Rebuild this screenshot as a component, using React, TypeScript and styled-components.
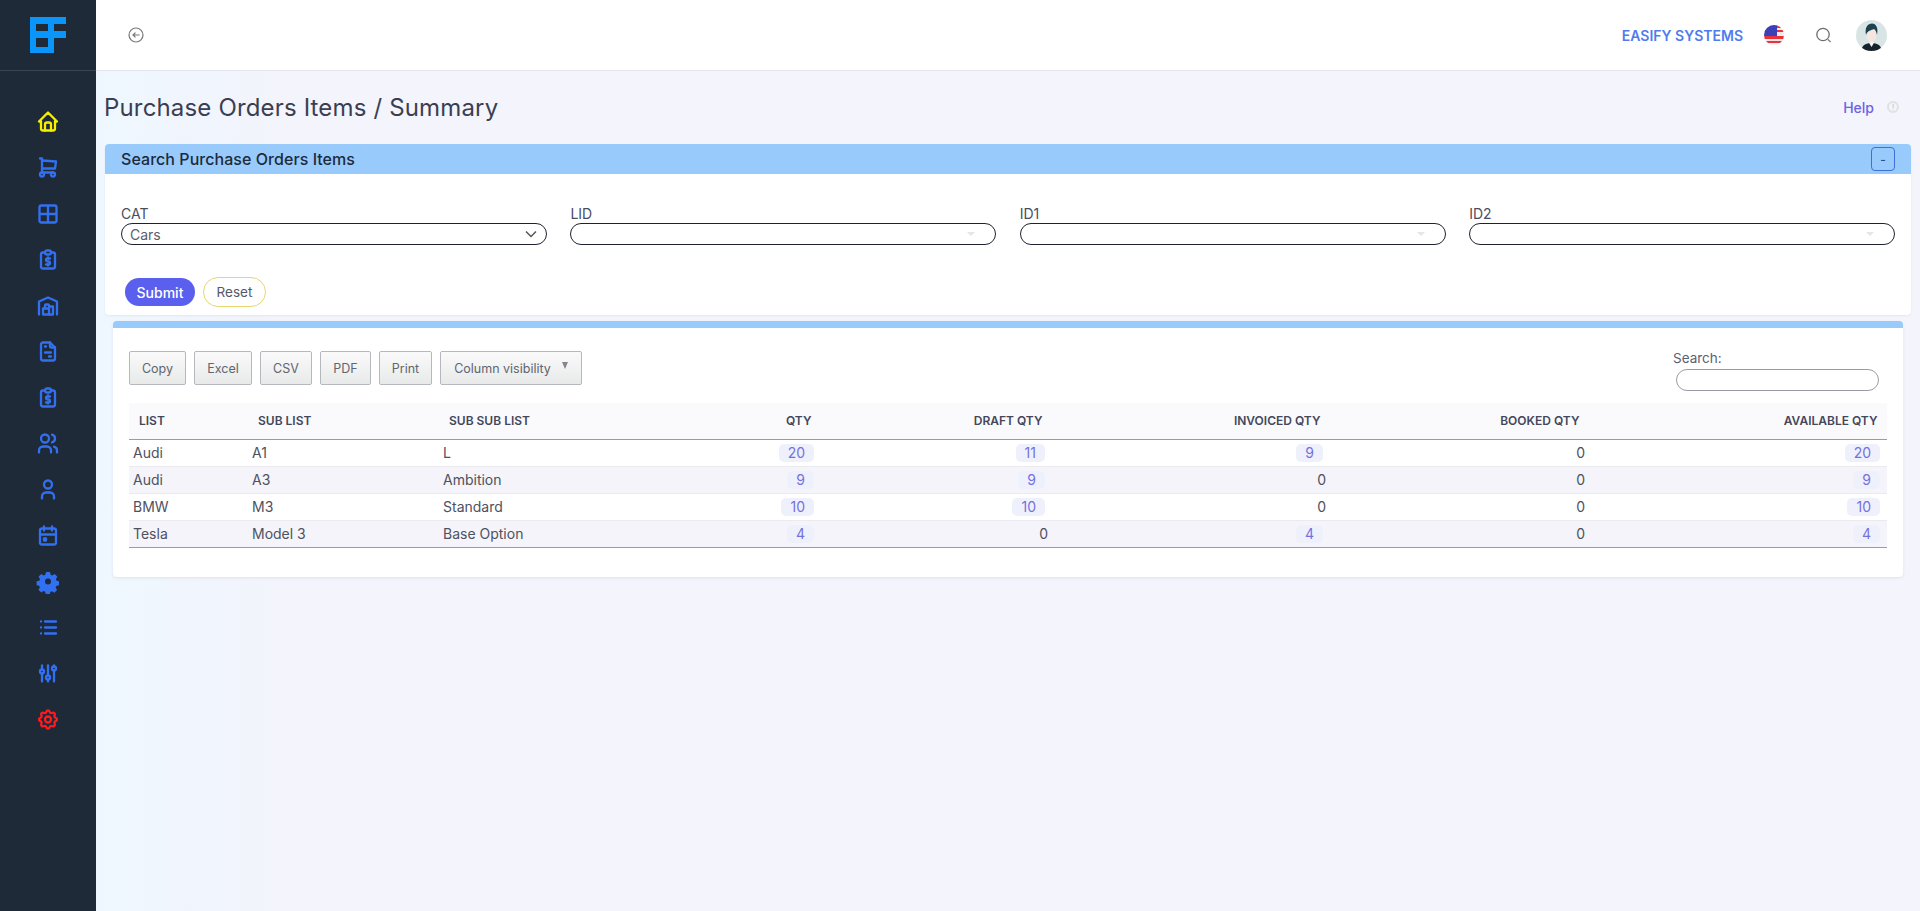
import React from "react";
import styled, { createGlobalStyle } from "styled-components";
import {
  TbHome, TbShoppingCart, TbReportMoney, TbBuildingWarehouse, TbFileInvoice,
  TbUsers, TbUser, TbCalendarEvent, TbList, TbAdjustments, TbSettings,
} from "react-icons/tb";

const Global = createGlobalStyle`
  html, body { margin: 0; padding: 0; height: 100%; }
  body { font-family: Inter, "Liberation Sans", sans-serif; background: #f3f4fc; color: #3f4254; }
  * { box-sizing: border-box; }
`;

const Shell = styled.div`
  display: flex;
  min-height: 911px;
  height: 911px;
  overflow: hidden;
`;

const Sidebar = styled.aside`
  width: 96px;
  flex: none;
  background: #1f2a38;
  display: flex;
  flex-direction: column;
  align-items: center;
`;

const LogoRow = styled.div`
  height: 71px;
  width: 100%;
  display: flex;
  align-items: center;
  justify-content: center;
  border-bottom: 1px solid #3a4553;
  padding-bottom: 1px;
`;

const Nav = styled.nav`
  display: flex;
  flex-direction: column;
  align-items: center;
  gap: 22px;
  padding-top: 38.5px;
`;

const NavIcon = styled.span<{ $c?: string }>`
  width: 24px;
  height: 24px;
  display: flex;
  align-items: center;
  justify-content: center;
  color: ${(p) => p.$c || "#3270f2"};
  svg { display: block; stroke-width: 2.3; }
`;

const Main = styled.main`
  flex: 1;
  min-width: 0;
  display: flex;
  flex-direction: column;
  background: linear-gradient(90deg, #eef7ff 0, #f3f4fc 180px);
`;

const Topbar = styled.header`
  height: 71px;
  flex: none;
  background: #fff;
  border-bottom: 1px solid #e4e6ef;
  display: flex;
  align-items: center;
  padding: 0 33px 0 32px;
`;

const Back = styled.span`
  color: #777;
  display: flex;
`;

const TopRight = styled.div`
  margin-left: auto;
  display: flex;
  align-items: center;
`;

const Company = styled.span`
  font-size: 14px;
  font-weight: 600;
  color: #4f7cec;
  margin-right: 21px;
`;

const Flag = styled.span`
  display: flex;
  margin-right: 32px;
`;

const SearchGlyph = styled.span`
  display: flex;
  margin-right: 24px;
  color: #6a6d72;
`;

const Avatar = styled.span`
  display: flex;
`;

const Content = styled.div`
  padding: 0 9px 0 9px;
  flex: 1;
`;

const TitleRow = styled.div`
  height: 73px;
  display: flex;
  align-items: center;
  padding-bottom: 1px;
`;

const Title = styled.h1`
  margin: 0 0 0 -1px;
  font-size: 24px;
  font-weight: 400;
  color: #3b3e52;
  letter-spacing: 0.16px;
`;

const HelpLink = styled.span`
  margin-left: auto;
  display: flex;
  align-items: center;
  gap: 13px;
  font-size: 14px;
  font-weight: 500;
  color: #6a63e8;
  margin-right: 12px;
`;

const HelpMark = styled.span`
  width: 12px;
  height: 12px;
  border-radius: 50%;
  border: 2px solid #dfe1e4;
  color: #cfd2d6;
  font-size: 8px;
  font-weight: 700;
  display: flex;
  align-items: center;
  justify-content: center;
`;

const SearchPanel = styled.section`
  background: #fff;
  border-radius: 4px;
  box-shadow: 0 1px 2px rgba(60, 60, 90, 0.08);
`;

const PanelHead = styled.div`
  height: 30px;
  background: #98cbfc;
  border-radius: 4px 4px 0 0;
  display: flex;
  align-items: center;
  justify-content: space-between;
  padding: 0 16px;
`;

const PanelTitle = styled.span`
  font-size: 16px;
  font-weight: 500;
  color: #1d2a3c;
  letter-spacing: 0.05px;
`;

const Collapse = styled.button`
  width: 24px;
  height: 24px;
  padding: 0;
  border: 1px solid #3f6fd8;
  border-radius: 4px;
  background: transparent;
  color: #2b4c90;
  font: 500 12px Inter, sans-serif;
`;

const PanelBody = styled.div`
  padding: 31px 16px 8px;
`;

const FieldGrid = styled.div`
  display: grid;
  grid-template-columns: repeat(4, 1fr);
  column-gap: 23.5px;
`;

const Field = styled.div`
  display: flex;
  flex-direction: column;
`;

const FieldLabel = styled.label`
  font-size: 14px;
  line-height: 18px;
  color: #4a4d5e;
`;

const SelectBox = styled.div`
  height: 22px;
  border: 1px solid #1f2230;
  border-radius: 11px;
  display: flex;
  align-items: center;
  justify-content: space-between;
  padding: 0 9px 0 8px;
  font-size: 14px;
  color: #5b5e6b;
  background: #fff;
`;

const FaintCaret = styled.span`
  width: 0;
  height: 0;
  margin-right: 11px;
  border-left: 4px solid transparent;
  border-right: 4px solid transparent;
  border-top: 4px solid #e6e6ea;
`;

const FormActions = styled.div`
  display: flex;
  align-items: center;
  gap: 8px;
  padding: 32px 0 0 4px;
`;

const Submit = styled.button`
  height: 28px;
  width: 70px;
  border: 0;
  border-radius: 14px;
  background: #5b5fee;
  color: #fff;
  font: 500 14px Inter, sans-serif;
`;

const Reset = styled.button`
  height: 30px;
  width: 63px;
  padding: 0;
  border: 1px solid #e8d670;
  border-radius: 15px;
  background: #fff;
  color: #55586a;
  font: 400 13.5px Inter, sans-serif;
`;

const TablePanel = styled.section`
  margin: 6px 8px 0;
  background: #fff;
  border-top: 7px solid #98cbfc;
  border-radius: 4px;
  height: 256px;
  padding: 23px 16px 0;
  box-shadow: 0 1px 3px rgba(60, 60, 90, 0.1);
`;

const TableTools = styled.div`
  display: flex;
  justify-content: space-between;
  align-items: flex-start;
  height: 52px;
`;

const ButtonGroup = styled.div`
  display: flex;
  gap: 8px;
`;

const ToolButton = styled.button<{ $w: number }>`
  height: 34px;
  width: ${(p) => p.$w}px;
  padding: 0;
  border: 1px solid #b5b8bd;
  border-radius: 2px;
  background: linear-gradient(180deg, #fafafa 0, #e8e9ea 100%);
  color: #62656f;
  font: 400 12.5px Inter, sans-serif;
  display: flex;
  align-items: center;
  justify-content: center;
  gap: 11px;
`;

const DownMark = styled.span`
  width: 0;
  height: 0;
  border-left: 3.5px solid transparent;
  border-right: 3.5px solid transparent;
  border-top: 7px solid #83868c;
  margin-top: -5px;
`;

const SearchWrap = styled.div`
  display: flex;
  flex-direction: column;
  align-items: flex-start;
  margin: -1px 8px 0 0;
`;

const SearchLabel = styled.label`
  font-size: 13.5px;
  line-height: 16px;
  color: #5d6070;
  margin-bottom: 3px;
`;

const SearchInput = styled.div`
  width: 203px;
  height: 22px;
  margin-left: 3px;
  border: 1px solid #9b9ca3;
  border-radius: 11px;
  background: #fff;
`;

const Table = styled.table`
  width: 100%;
  border-collapse: collapse;
  table-layout: fixed;
  font-size: 14px;
`;

const Th = styled.th<{ $r?: boolean }>`
  height: 36px;
  background: #fafafd;
  border-bottom: 1px solid #9a9ca2;
  font-size: 12px;
  font-weight: 600;
  color: #44475a;
  text-align: ${(p) => (p.$r ? "right" : "left")};
  padding: ${(p) => (p.$r ? "0 9.5px 0 0" : "0 0 0 10px")};
  text-transform: uppercase;
`;

const Row = styled.tr<{ $alt?: boolean }>`
  background: ${(p) => (p.$alt ? "#f4f4fa" : "#fff")};
  &:last-child td { border-bottom: 1px solid #9a9ca2; }
`;

const Td = styled.td<{ $r?: boolean }>`
  height: 27px;
  padding: ${(p) => (p.$r ? "0 4px 0 0" : "0 0 0 4px")};
  text-align: ${(p) => (p.$r ? "right" : "left")};
  color: #4e5160;
  border-bottom: 1px solid #eaeaf0;
`;

const QtyBadge = styled.span`
  display: inline-block;
  margin-right: 3px;
  padding: 0 9px;
  line-height: 18px;
  text-align: center;
  border-radius: 5px;
  background: #eef0fb;
  color: #7570e0;
`;

const IconLogo = () => (
  <svg width="36" height="36" viewBox="0 0 36 36" aria-hidden="true">
    <path fill="#0a95fb" fillRule="evenodd" d="M0 0H36V7H24V14H36V21H24V36H0ZM6 7V14H18V7ZM6 21V30H18V21Z" />
  </svg>
);

const GridIcon = () => (
  <svg width="24" height="24" viewBox="0 0 24 24" fill="none" stroke="currentColor" strokeWidth="2.3" strokeLinejoin="round">
    <rect x="3.500" y="3.500" width="17" height="17" rx="2" />
    <path d="M12 3.500V20.500M3.500 12H20.500" />
  </svg>
);

const SolidGear = () => (
  <svg width="25" height="25" viewBox="0 0 24 24" style={{ strokeWidth: 0 }}>
    <path
      fill="currentColor"
      fillRule="evenodd"
      d="M10 2.500h4l.6 2.700 1.700.7 2.300-1.500 2.800 2.800-1.500 2.300.7 1.700 2.400.6v4l-2.700.6-.7 1.700 1.500 2.300-2.800 2.800-2.300-1.500-1.700.7-.5 2.600h-4l-.6-2.700-1.700-.7-2.300 1.500-2.800-2.800 1.500-2.300-.7-1.700-2.600-.5v-4l2.700-.6.7-1.700-1.500-2.300 2.800-2.800 2.300 1.500 1.700-.7ZM12 9a3 3 0 1 0 0 6 3 3 0 0 0 0-6Z"
    />
  </svg>
);

const BackIcon = () => (
  <svg width="16" height="16" viewBox="0 0 16 16" fill="none" stroke="currentColor" strokeWidth="1.2">
    <circle cx="8" cy="8" r="7" />
    <path d="M11.500 8H5M7.500 5.600 5 8l2.500 2.400" />
  </svg>
);

const FlagIcon = () => (
  <svg width="20" height="20" viewBox="0 0 20 20">
    <defs>
      <clipPath id="flagclip"><circle cx="10" cy="10" r="10" /></clipPath>
    </defs>
    <g clipPath="url(#flagclip)">
      <rect width="20" height="20" fill="#f6e7e4" />
      <rect y="11" width="20" height="3" fill="#e8323c" />
      <rect y="5" width="20" height="2" fill="#e8323c" />
      <rect y="16" width="20" height="2" fill="#e8323c" />
      <rect width="13" height="11" fill="#3b3fb8" />
      <rect x="13" width="7" height="3" fill="#e8323c" />
    </g>
  </svg>
);

const SearchIcon = () => (
  <svg width="16" height="18" viewBox="0 0 16 18" fill="none" stroke="currentColor" strokeWidth="1.300">
    <circle cx="7" cy="8.500" r="6.200" />
    <path d="M12 13.500l2.700 2.700" strokeWidth="1.200" stroke="#777" />
  </svg>
);

const AvatarIcon = () => (
  <svg width="31" height="31" viewBox="0 0 31 31">
    <defs>
      <clipPath id="avatarclip"><circle cx="15.500" cy="15.500" r="15.500" /></clipPath>
    </defs>
    <g clipPath="url(#avatarclip)">
      <rect width="31" height="31" fill="#d9e5e5" />
      <path d="M5 31c1-6 5-8 10.500-8S25 25 26 31Z" fill="#17232b" />
      <path d="M12.500 22h6l-3 5Z" fill="#f5f5f5" />
      <ellipse cx="15.500" cy="14.500" rx="5" ry="7.500" fill="#f7e6df" />
      <path d="M10 15C8.500 7 12 3.500 16 3.500c4 0 6.500 4 5 11.500-.5-3-1.500-5-3-6-2.500 1.500-6.500 1-8 6Z" fill="#1c4250" />
    </g>
  </svg>
);

type NavEntry = { I: React.ComponentType<{ size?: number }>; c?: string };

const navItems: NavEntry[] = [
  { I: TbHome, c: "#f5f000" },
  { I: TbShoppingCart },
  { I: GridIcon },
  { I: TbReportMoney },
  { I: TbBuildingWarehouse },
  { I: TbFileInvoice },
  { I: TbReportMoney },
  { I: TbUsers },
  { I: TbUser },
  { I: TbCalendarEvent },
  { I: SolidGear },
  { I: TbList },
  { I: TbAdjustments },
  { I: TbSettings, c: "#ff1a1f" },
];

const rows: { a: string; b: string; c: string; q: number[] }[] = [
  { a: "Audi", b: "A1", c: "L", q: [20, 11, 9, 0, 20] },
  { a: "Audi", b: "A3", c: "Ambition", q: [9, 9, 0, 0, 9] },
  { a: "BMW", b: "M3", c: "Standard", q: [10, 10, 0, 0, 10] },
  { a: "Tesla", b: "Model 3", c: "Base Option", q: [4, 0, 4, 0, 4] },
];

const colWidths = [119, 191, 242, 140, 231, 278, 259, 298];

const tools: [string, number][] = [["Copy", 57], ["Excel", 58], ["CSV", 52], ["PDF", 51], ["Print", 53]];

export default function App() {
  return (
    <>
      <Global />
      <Shell>
        <Sidebar>
          <LogoRow><IconLogo /></LogoRow>
          <Nav>
            {navItems.map(({ I, c }, i) => (
              <NavIcon key={i} $c={c}><I size={25} /></NavIcon>
            ))}
          </Nav>
        </Sidebar>
        <Main>
          <Topbar>
            <Back><BackIcon /></Back>
            <TopRight>
              <Company>EASIFY SYSTEMS</Company>
              <Flag><FlagIcon /></Flag>
              <SearchGlyph><SearchIcon /></SearchGlyph>
              <Avatar><AvatarIcon /></Avatar>
            </TopRight>
          </Topbar>
          <Content>
            <TitleRow>
              <Title>Purchase Orders Items / Summary</Title>
              <HelpLink>Help <HelpMark>!</HelpMark></HelpLink>
            </TitleRow>
            <SearchPanel>
              <PanelHead>
                <PanelTitle>Search Purchase Orders Items</PanelTitle>
                <Collapse>-</Collapse>
              </PanelHead>
              <PanelBody>
                <FieldGrid>
                  <Field>
                    <FieldLabel>CAT</FieldLabel>
                    <SelectBox>
                      Cars
                      <svg width="12" height="8" viewBox="0 0 12 8" fill="none" stroke="#555" strokeWidth="1.500"><path d="M1 1.500 6 6.500l5-5" /></svg>
                    </SelectBox>
                  </Field>
                  {["LID", "ID1", "ID2"].map((l) => (
                    <Field key={l}>
                      <FieldLabel>{l}</FieldLabel>
                      <SelectBox><span /><FaintCaret /></SelectBox>
                    </Field>
                  ))}
                </FieldGrid>
                <FormActions>
                  <Submit>Submit</Submit>
                  <Reset>Reset</Reset>
                </FormActions>
              </PanelBody>
            </SearchPanel>
            <TablePanel>
              <TableTools>
                <ButtonGroup>
                  {tools.map(([b, w]) => (
                    <ToolButton key={b} $w={w}>{b}</ToolButton>
                  ))}
                  <ToolButton $w={142}>Column visibility <DownMark /></ToolButton>
                </ButtonGroup>
                <SearchWrap>
                  <SearchLabel>Search:</SearchLabel>
                  <SearchInput />
                </SearchWrap>
              </TableTools>
              <Table>
                <colgroup>
                  {colWidths.map((w, i) => <col key={i} style={{ width: w }} />)}
                </colgroup>
                <thead>
                  <tr>
                    <Th>List</Th>
                    <Th>Sub List</Th>
                    <Th>Sub Sub List</Th>
                    <Th $r>Qty</Th>
                    <Th $r>Draft Qty</Th>
                    <Th $r>Invoiced Qty</Th>
                    <Th $r>Booked Qty</Th>
                    <Th $r>Available Qty</Th>
                  </tr>
                </thead>
                <tbody>
                  {rows.map((r, i) => (
                    <Row key={i} $alt={i % 2 === 1}>
                      <Td>{r.a}</Td>
                      <Td>{r.b}</Td>
                      <Td>{r.c}</Td>
                      {r.q.map((q, j) => (
                        <Td key={j} $r>{q === 0 ? q : <QtyBadge>{q}</QtyBadge>}</Td>
                      ))}
                    </Row>
                  ))}
                </tbody>
              </Table>
            </TablePanel>
          </Content>
        </Main>
      </Shell>
    </>
  );
}
